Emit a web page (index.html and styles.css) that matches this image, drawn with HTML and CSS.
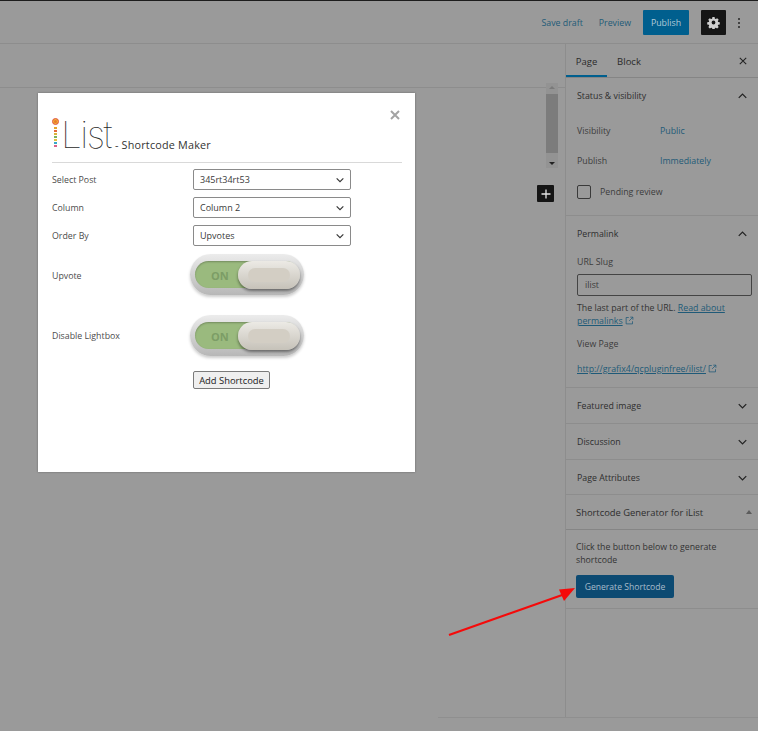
FILE: index.html
```html
<!DOCTYPE html>
<html lang="en">
<head>
<meta charset="utf-8">
<title>iList Shortcode Maker</title>
<link rel="stylesheet" href="styles.css">
</head>
<body>
<div class="app">
  <header class="topbar">
    <a class="top-link save">Save draft</a>
    <a class="top-link preview">Preview</a>
    <span class="publish">Publish</span>
    <span class="gear">
      <svg viewBox="0 0 24 24" width="13" height="13"><path fill="#cfcfcf" fill-rule="evenodd" d="M10 2h4l.6 3 1.600.7 2.600-1.700 2.800 2.800-1.700 2.600.7 1.600 3 .6v4l-3 .6-.7 1.600 1.700 2.600-2.800 2.800-2.600-1.700-1.600.7-.6 3h-4l-.6-3-1.600-.7-2.600 1.700-2.800-2.800 1.700-2.600-.7-1.600-3-.6v-4l3-.6.7-1.600L2.200 6.800 5 4l2.600 1.700L9.400 5zM12 8.500a3.500 3.500 0 1 0 0 7 3.500 3.500 0 0 0 0-7z"/></svg>
    </span>
    <span class="dots"><i></i><i></i><i></i></span>
  </header>
  <div class="workspace">
    <main class="editor">
      <div class="title-strip"></div>
      <div class="scroll-area">
        <div class="scrollbar">
          <span class="sb-up"></span>
          <span class="sb-thumb"></span>
          <span class="sb-down"></span>
        </div>
        <span class="add-block">
          <svg viewBox="0 0 16 16" width="16" height="16"><path d="M8 3.500v9M3.500 8h9" stroke="#e4e4e4" stroke-width="1.300" fill="none"/></svg>
        </span>
      </div>
    </main>
    <aside class="sidebar">
      <div class="tabs">
        <span class="tab active">Page</span>
        <span class="tab">Block</span>
        <svg class="tabs-close" viewBox="0 0 10 10" width="8" height="8"><path d="M1 1l8 8M9 1l-8 8" stroke="#222" stroke-width="1.300" fill="none"/></svg>
      </div>
      <section class="panel status">
        <h3 class="panel-title">Status &amp; visibility<svg class="chev" viewBox="0 0 12 8" width="9" height="6"><path d="M1 6.500l5-5 5 5" stroke="#222" stroke-width="1.700" fill="none"/></svg></h3>
        <div class="kv kv-first"><span>Visibility</span><a>Public</a></div>
        <div class="kv kv-second"><span>Publish</span><a>Immediately</a></div>
        <label class="check"><span class="box"></span>Pending review</label>
      </section>
      <section class="panel permalink">
        <h3 class="panel-title">Permalink<svg class="chev" viewBox="0 0 12 8" width="9" height="6"><path d="M1 6.500l5-5 5 5" stroke="#222" stroke-width="1.700" fill="none"/></svg></h3>
        <div class="field-label">URL Slug</div>
        <div class="slug">ilist</div>
        <p class="help">The last part of the URL. <a>Read about</a><br><a>permalinks</a> <svg class="ext" viewBox="0 0 12 12" width="9" height="9"><path d="M5 2H1.500v8.500H10V7M7 1.500h3.500V5M10.500 1.500L5.500 6.500" stroke="#1f5a78" stroke-width="1" fill="none"/></svg></p>
        <div class="view-label">View Page</div>
        <div class="view-link"><a>http://grafix4/qcpluginfree/ilist/</a> <svg class="ext" viewBox="0 0 12 12" width="9" height="9"><path d="M5 2H1.500v8.500H10V7M7 1.500h3.500V5M10.500 1.500L5.500 6.500" stroke="#1f5a78" stroke-width="1" fill="none"/></svg></div>
      </section>
      <section class="panel closed">
        <h3 class="panel-title">Featured image<svg class="chev" viewBox="0 0 12 8" width="9" height="6"><path d="M1 1.500l5 5 5-5" stroke="#222" stroke-width="1.700" fill="none"/></svg></h3>
      </section>
      <section class="panel closed">
        <h3 class="panel-title">Discussion<svg class="chev" viewBox="0 0 12 8" width="9" height="6"><path d="M1 1.500l5 5 5-5" stroke="#222" stroke-width="1.700" fill="none"/></svg></h3>
      </section>
      <section class="panel closed attrs">
        <h3 class="panel-title">Page Attributes<svg class="chev" viewBox="0 0 12 8" width="9" height="6"><path d="M1 1.500l5 5 5-5" stroke="#222" stroke-width="1.700" fill="none"/></svg></h3>
      </section>
      <section class="metabox">
        <h3 class="metabox-title">Shortcode Generator for iList<span class="tri"></span></h3>
        <div class="metabox-body">
          <p>Click the button below to generate shortcode</p>
          <span class="generate">Generate Shortcode</span>
        </div>
      </section>
    </aside>
  </div>
  <div class="foot-line"></div>
</div>

<svg class="arrow" viewBox="0 0 140 60" width="140" height="60"><path d="M2 56L118 15" stroke="#f50a0a" stroke-width="2.200" fill="none"/><path d="M128 9L112 10.500 117 22z" fill="#f50a0a"/></svg>

<div class="modal">
  <svg class="modal-close" viewBox="0 0 10 10" width="10" height="10"><path d="M1 1l8 8M9 1l-8 8" stroke="#a3a3a3" stroke-width="2" fill="none"/></svg>
  <div class="modal-head">
    <span class="logo-i">
      <i class="dot-top"></i><i class="d1"></i><i class="d2"></i><i class="d3"></i><i class="d4"></i><i class="d5"></i><i class="d6"></i><i class="d7"></i>
    </span>
    <span class="logo-word">List</span>
    <span class="logo-sub">- Shortcode Maker</span>
  </div>
  <div class="form">
    <div class="row"><span class="lbl">Select Post</span><span class="select">345rt34rt53<svg viewBox="0 0 12 8" width="8" height="6"><path d="M1 1.500l5 5 5-5" stroke="#333" stroke-width="1.700" fill="none"/></svg></span></div>
    <div class="row"><span class="lbl">Column</span><span class="select">Column 2<svg viewBox="0 0 12 8" width="8" height="6"><path d="M1 1.500l5 5 5-5" stroke="#333" stroke-width="1.700" fill="none"/></svg></span></div>
    <div class="row"><span class="lbl">Order By</span><span class="select">Upvotes<svg viewBox="0 0 12 8" width="8" height="6"><path d="M1 1.500l5 5 5-5" stroke="#333" stroke-width="1.700" fill="none"/></svg></span></div>
    <div class="row toggle-row first-toggle"><span class="lbl">Upvote</span><span class="toggle"><span class="track"><b>ON</b></span><span class="knob"><span class="knob-in"></span></span></span></div>
    <div class="row toggle-row second-toggle"><span class="lbl">Disable Lightbox</span><span class="toggle"><span class="track"><b>ON</b></span><span class="knob"><span class="knob-in"></span></span></span></div>
    <div class="row btn-row"><span class="lbl"></span><span class="add">Add Shortcode</span></div>
  </div>
</div>
</body>
</html>
```
FILE: styles.css
```css
* { box-sizing: border-box; }
html, body { margin: 0; height: 100%; }
body {
  width: 758px;
  height: 731px;
  overflow: hidden;
  background: #9a9a9a;
  font-family: "Open Sans", "Noto Sans", sans-serif;
  font-size: 8.8px;
  color: #2e2e2e;
}
a { color: #1f5a78; }
.app { width: 758px; height: 731px; display: flex; flex-direction: column; border-top: 1px solid #1d1d1d; }

.topbar {
  height: 43px;
  flex: none;
  display: flex;
  align-items: center;
  justify-content: flex-end;
  border-bottom: 1px solid #8d8d8d;
  padding: 1px 18px 0 0;
}
.save { margin-right: 16px; }
.preview { margin-right: 12px; }
.publish {
  width: 46px; height: 25px;
  display: flex; align-items: center; justify-content: center;
  background: #005f8e;
  color: #b4cbd8;
  border-radius: 1px;
  margin-right: 12px;
}
.gear {
  width: 25px; height: 25px;
  background: #151515;
  border-radius: 1px;
  display: flex; align-items: center; justify-content: center;
  margin-right: 12px;
}
.dots { width: 2px; display: flex; flex-direction: column; gap: 2px; }
.dots i { width: 2px; height: 2px; background: #262626; border-radius: 50%; display: block; }

.workspace { display: flex; height: 673px; flex: none; }
.editor { width: 566px; flex: none; border-right: 1px solid #8d8d8d; }
.title-strip { height: 44px; border-bottom: 1px solid #8d8d8d; }
.scroll-area { display: flex; flex-direction: column; align-items: flex-end; padding-right: 7px; }
.scrollbar {
  width: 12px; height: 85px;
  margin-top: -5px;
  background: #939393;
  display: flex; flex-direction: column; align-items: center;
  justify-content: space-between;
  padding: 3px 0;
}
.sb-up, .sb-down { width: 0; height: 0; border-left: 3px solid transparent; border-right: 3px solid transparent; }
.sb-up { border-bottom: 3px solid #7a7a7a; }
.sb-down { border-top: 3px solid #222; }
.sb-thumb { width: 12px; height: 59px; background: #7c7c7c; margin-top: -1px; margin-bottom: 3px; }
.add-block {
  width: 17px; height: 17px; background: #151515; border-radius: 1px;
  margin-top: 17px; margin-right: 4px;
  display: flex; align-items: center; justify-content: center;
}

.sidebar { flex: 1; min-width: 0; }
.tabs { height: 34px; display: flex; align-items: stretch; border-bottom: 1px solid #858585; position: relative; }
.tab { width: 41px; display: flex; align-items: center; justify-content: center; color: #2a2a2a; font-size: 9.500px; padding-top: 1px; }
.tab.active { box-shadow: inset 0 -2px 0 #005f8e; }
.tab + .tab { width: 44px; }
.tabs-close { position: absolute; right: 11px; top: 13px; }

.panel { border-bottom: 1px solid #8d8d8d; padding: 0 11px; }
.panel-title { margin: 0; height: 36px; display: flex; align-items: center; justify-content: space-between; font-weight: 500; font-size: 8.800px; color: #2e2e2e; }
.status { height: 138px; }
.status .panel-title { height: 35px; }
.kv { display: flex; height: 14px; align-items: center; }
.kv span { width: 83px; color: #3c3c3c; }
.kv-first { margin-top: 11px; }
.kv-second { margin-top: 16px; }
.check { display: flex; align-items: center; margin-top: 17px; color: #3c3c3c; }
.box { width: 14px; height: 14px; border: 1px solid #3a3a3a; border-radius: 2px; margin-right: 9px; }
.permalink { height: 172px; }
.field-label { margin-top: 4px; height: 13px; line-height: 13px; color: #3c3c3c; }
.slug { margin-top: 5px; width: 175px; height: 22px; border: 1px solid #444; border-radius: 2px; padding: 0 7px; line-height: 20px; color: #3c3c3c; }
.help { margin: 6px 0 0; line-height: 13px; color: #333; }
.help a, .view-link a { text-decoration: underline; }
.ext { vertical-align: -1px; }
.view-label { margin-top: 10px; line-height: 13px; color: #3c3c3c; }
.view-link { margin-top: 12px; line-height: 13px; }
.closed { height: 36px; }
.attrs { height: 35px; }

.metabox { border-bottom: 1px solid #8d8d8d; height: 114px; }
.metabox-title { margin: 0; height: 35px; border-bottom: 1px solid #858585; padding: 0 6px 0 10px; display: flex; align-items: center; justify-content: space-between; font-weight: 500; font-size: 9.400px; color: #2e2e2e; }
.tri { width: 0; height: 0; border-left: 3px solid transparent; border-right: 3px solid transparent; border-bottom: 4px solid #5c5c5c; }
.metabox-body { padding: 11px 10px 0; }
.metabox-body p { margin: 0; line-height: 13px; color: #333; width: 170px; font-size: 8.750px; }
.generate {
  display: flex; align-items: center; justify-content: center;
  width: 98px; height: 23px; margin-top: 8px;
  background: #0c4a72; color: #a9bccb; border-radius: 2px; font-size: 8.600px;
}

.foot-line { height: 1px; background: #8f8f8f; margin-left: 438px; flex: none; }

.arrow { position: absolute; left: 447px; top: 579px; }

.modal {
  position: absolute; left: 38px; top: 93px;
  width: 377px; height: 379px;
  background: #fff;
  padding: 0 14px;
  box-shadow: 0 0 2px rgba(0,0,0,.35);
}
.modal-close { position: absolute; right: 15px; top: 17px; }
.modal-head { height: 70px; border-bottom: 1px solid #d9d9d9; display: flex; align-items: flex-end; padding-bottom: 11px; width: 350px; }
.logo-i { width: 7px; height: 32px; display: flex; flex-direction: column; align-items: center; margin-right: 2px; margin-bottom: 1px; gap: 1px; }
.logo-i i { width: 3px; height: 2px; display: block; }
.logo-i .dot-top { width: 7px; height: 7px; border-radius: 50%; background: #e8782e; border: 1.500px solid #e25f4d; box-shadow: inset 0 0 0 1px #f2b632; margin-bottom: 1px; }
.d1 { background: #e5a52f; } .d2 { background: #e36a3a; } .d3 { background: #d9b43a; }
.d4 { background: #7cb35b; } .d5 { background: #e3c13d; } .d6 { background: #38a7c9; } .d7 { background: #d9628a; }
.logo-word { font-family: Inter, Roboto, sans-serif; font-weight: 100; font-size: 37px; line-height: 32px; color: #2a2a2a; letter-spacing: -1.500px; margin-right: 4px; }
.logo-sub { font-size: 10.800px; font-weight: 500; color: #333; line-height: 13px; letter-spacing: .2px; }

.form { padding-top: 6px; }
.row { display: flex; align-items: center; }
.lbl { width: 141px; flex: none; color: #4c4c4c; }
.row:not(.toggle-row):not(.btn-row) { height: 21px; margin-bottom: 7px; }
.select {
  width: 158px; height: 21px;
  border: 1px solid #8a8a8a; border-radius: 2px;
  padding: 0 6px;
  display: flex; align-items: center; justify-content: space-between;
  font-size: 9px; color: #3a3a3a;
}
.toggle-row { align-items: flex-start; }
.first-toggle { margin-top: 8px; height: 41px; }
.first-toggle .lbl { margin-top: 16px; }
.second-toggle { margin-top: 20px; height: 41px; }
.second-toggle .lbl { margin-top: 15px; }
.toggle {
  width: 114px; height: 41px; margin-left: -3px;
  border-radius: 21px;
  background: linear-gradient(#ececec, #b7b7b7);
  box-shadow: 0 2px 3px rgba(0,0,0,.2);
  position: relative;
  padding: 7px 5px;
}
.track {
  display: flex; align-items: center;
  width: 104px; height: 27px; padding: 1px 0 0 16px;
  border-radius: 14px;
  background: #9aba7e;
  box-shadow: inset 0 1px 2px rgba(0,0,0,.25);
}
.track b { font-size: 11px; font-weight: 700; color: #7c9d66; }
.knob {
  position: absolute; left: 48px; top: 7px;
  width: 62px; height: 28px; border-radius: 14px;
  background: linear-gradient(#eceae5, #c6c2b9);
  box-shadow: 0 2px 3px rgba(0,0,0,.45);
  display: flex; align-items: center; justify-content: center;
}
.knob-in { width: 42px; height: 14px; border-radius: 7px; background: #d3cec4; }
.btn-row { margin-top: 15px; height: 18px; }
.add {
  width: 77px; height: 18px;
  display: flex; align-items: center; justify-content: center;
  border: 1px solid #7a7a7a; border-radius: 2px;
  background: #efefef; color: #222; font-size: 9.400px;
}
```
